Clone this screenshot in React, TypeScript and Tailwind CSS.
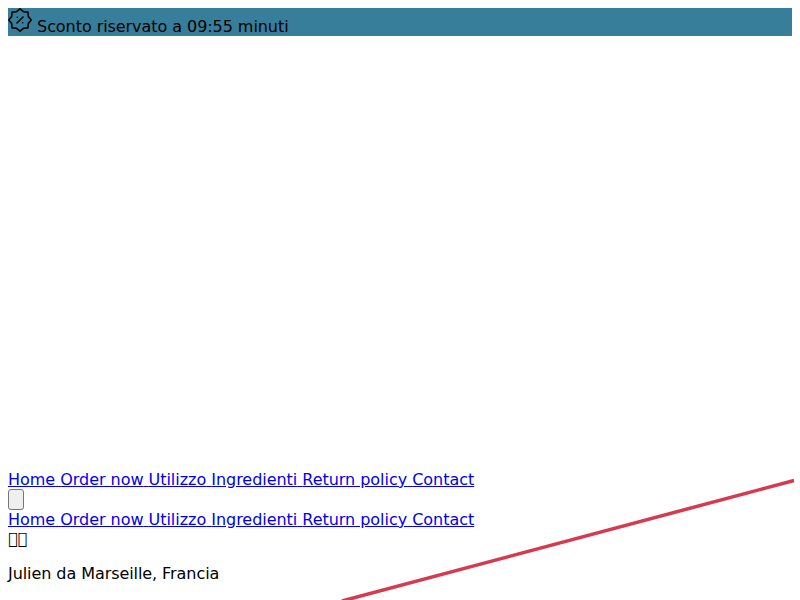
const links = ["Home", "Order now", "Utilizzo", "Ingredienti", "Return policy", "Contact"];

// 8-point scalloped badge, same shape as the rosette in the promo bar
const badgePoints = Array.from({ length: 16 }, (_, i) => {
  const r = i % 2 === 0 ? 11.2 : 9;
  const a = (i * Math.PI) / 8 - Math.PI / 2;
  return `${(12 + r * Math.cos(a)).toFixed(2)},${(12 + r * Math.sin(a)).toFixed(2)}`;
}).join(" ");

function DiscountBadge() {
  return (
    <svg width="24" height="24" viewBox="0 0 24 24" fill="none" stroke="currentColor" strokeWidth="1.6" strokeLinecap="round" strokeLinejoin="round" className="inline align-baseline">
      <polygon points={badgePoints} />
      <path d="M9 15l6 -6" />
      <path d="M9.3 9.3h.01M14.7 14.7h.01" />
    </svg>
  );
}

function NavLinks() {
  return (
    <div className="tracking-[-0.035px]">
      {links.map((label, i) => (
        <a key={label} href="#" className="text-[#0000ee] underline">
          {label}
          {i < links.length - 1 && " "}
        </a>
      ))}
    </div>
  );
}

export default function App() {
  return (
    <div className="relative h-[600px] overflow-hidden bg-white p-2 font-['DejaVu_Sans',sans-serif] text-base text-black [line-height:normal]">
      <div className="bg-[#377e9b] tracking-[-0.06px]">
        <DiscountBadge /> <span>Sconto riservato a 09:55 minuti</span>
      </div>
      <div className="h-[434px]" />
      <NavLinks />
      <button type="button" className="block h-[21px] w-4 rounded-[3px] border border-[#767676] bg-[#efefef]" />
      <NavLinks />
      <div>&#xE000;&#xE001;</div>
      <p className="mt-4 tracking-[-0.07px]">Julien da Marseille, Francia</p>
      <svg className="absolute top-0 left-0" width="800" height="600" viewBox="0 0 800 600" fill="none">
        <line x1="794" y1="480.5" x2="342" y2="601" stroke="#d63a4e" strokeWidth="3.5" />
      </svg>
    </div>
  );
}
